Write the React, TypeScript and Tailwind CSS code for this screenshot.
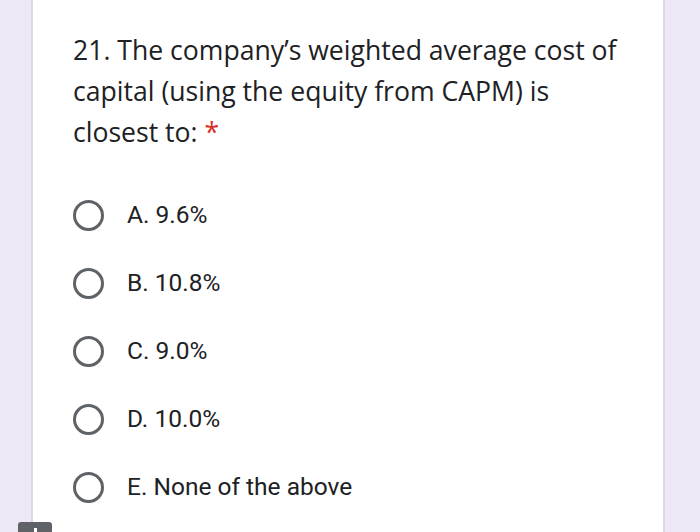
const options = ["A. 9.6%", "B. 10.8%", "C. 9.0%", "D. 10.0%", "E. None of the above"];

export default function App() {
  return (
    <div className="relative flex h-[532px] w-[700px] overflow-hidden bg-[#ede7f6]">
      <div className="ml-[31px] w-[634px] border-x-2 border-[#dcd6e6] bg-white pl-[40px] pt-[30px]">
        <div className="text-[26.6px] leading-[41px] text-[#202124] [font-family:'Open_Sans',sans-serif]">
          <div>21. The company’s weighted average cost of</div>
          <div>capital (using the equity from CAPM) is</div>
          <div>
            closest to: <span className="text-[#d93025]">*</span>
          </div>
        </div>
        <div className="mt-[47px] flex flex-col gap-[38px]">
          {options.map((o) => (
            <div key={o} className="flex h-[30px] items-center">
              <div className="h-[31px] w-[31px] rounded-full border-[3px] border-[#5f6368]" />
              <span className="ml-[23px] text-[24.5px] text-[#202124] [font-family:Roboto,sans-serif]">{o}</span>
            </div>
          ))}
        </div>
      </div>
      <div className="absolute left-[18px] top-[522px] h-[20px] w-[34px] rounded-[3px] bg-[#5f6368]">
        <div className="ml-[16px] mt-[6px] h-[10px] w-[3px] bg-white" />
      </div>
    </div>
  );
}
